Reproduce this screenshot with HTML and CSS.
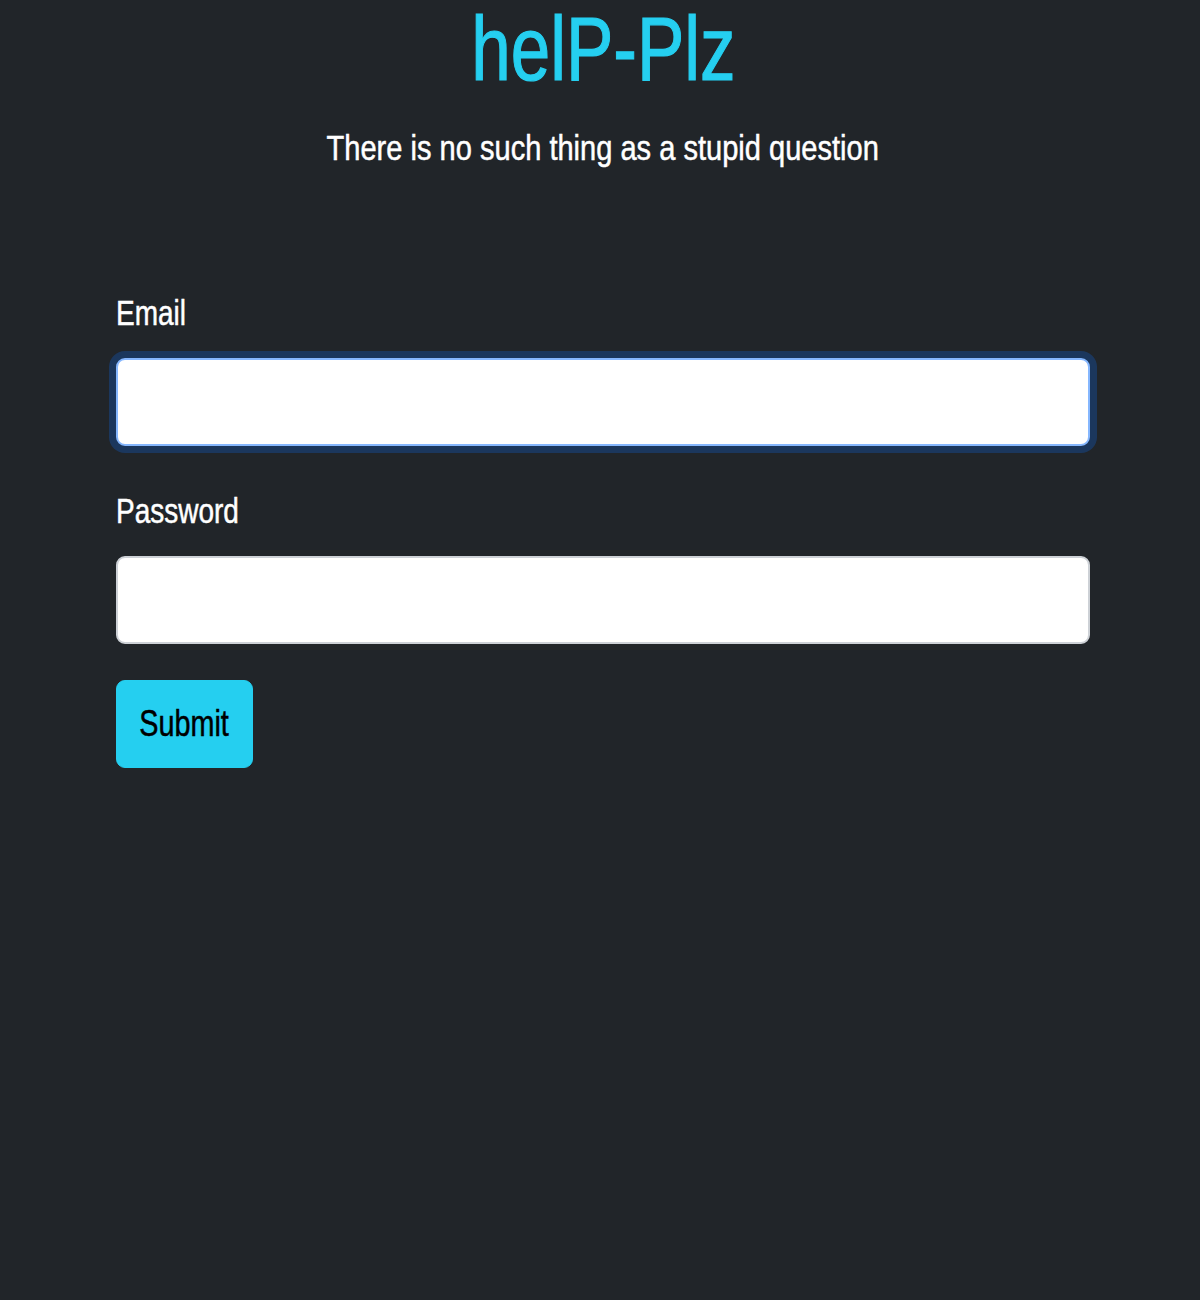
FILE: index.html
```html
<!DOCTYPE html>
<html lang="en">
<head>
<meta charset="utf-8">
<title>helP-Plz</title>
<link rel="stylesheet" href="styles.css">
</head>
<body>
<header class="hero">
  <h1 class="brand"><span class="squeeze squeeze-center">helP-Plz</span></h1>
  <p class="tagline"><span class="squeeze squeeze-center squeeze-wide">There is no such thing as a stupid question</span></p>
</header>
<form class="login">
  <div class="field">
    <label class="field-label" for="email"><span class="squeeze">Email</span></label>
    <input class="field-input is-focus" id="email" type="email">
  </div>
  <div class="field">
    <label class="field-label" for="password"><span class="squeeze">Password</span></label>
    <input class="field-input" id="password" type="password">
  </div>
  <button class="submit" type="button"><span class="squeeze squeeze-center">Submit</span></button>
</form>
</body>
</html>
```

FILE: styles.css
```css
html, body {
  margin: 0;
  padding: 0;
  background: #212529;
  min-height: 1300px;
}
body {
  font-family: "Liberation Sans", Arial, sans-serif;
  color: #ffffff;
}
.squeeze {
  display: inline-block;
  transform: scaleX(0.8);
  transform-origin: left center;
  white-space: nowrap;
  -webkit-text-stroke: 0.5px currentColor;
}
.squeeze-center {
  transform-origin: center center;
}
.squeeze-wide {
  transform: scaleX(0.83);
}
.hero {
  text-align: center;
  padding-left: 6px;
}
.brand {
  margin: 0;
  font-size: 91px;
  line-height: 97px;
  font-weight: 400;
  color: #25cff0;
}
.brand .squeeze {
  transform: scaleX(0.78);
  -webkit-text-stroke: 1.2px currentColor;
}
.tagline {
  margin: 30px 0 0;
  font-size: 35px;
  line-height: 42px;
}
.login {
  width: 974px;
  margin: 123px 0 0 116px;
  display: flex;
  flex-direction: column;
  align-items: flex-start;
}
.field {
  width: 100%;
  display: flex;
  flex-direction: column;
  margin-bottom: 44px;
}
.field + .field {
  margin-bottom: 36px;
}
.field-label {
  font-size: 35px;
  line-height: 42px;
  margin-bottom: 24px;
}
.field-input {
  box-sizing: border-box;
  width: 100%;
  height: 88px;
  border: 2px solid #cdd1d6;
  border-radius: 9px;
  background: #ffffff;
  outline: none;
  font-size: 35px;
  padding: 0 20px;
  margin: 0;
}
.field-input.is-focus {
  border-color: #86b7fe;
  box-shadow: 0 0 0 7px rgba(13, 110, 253, 0.25);
}
.submit {
  box-sizing: border-box;
  height: 88px;
  width: 137px;
  border: 1px solid #25cff0;
  border-radius: 9px;
  background: #25cff0;
  color: #000000;
  font-family: inherit;
  font-size: 36px;
  line-height: 42px;
  padding: 0;
  margin: 0;
}
```
